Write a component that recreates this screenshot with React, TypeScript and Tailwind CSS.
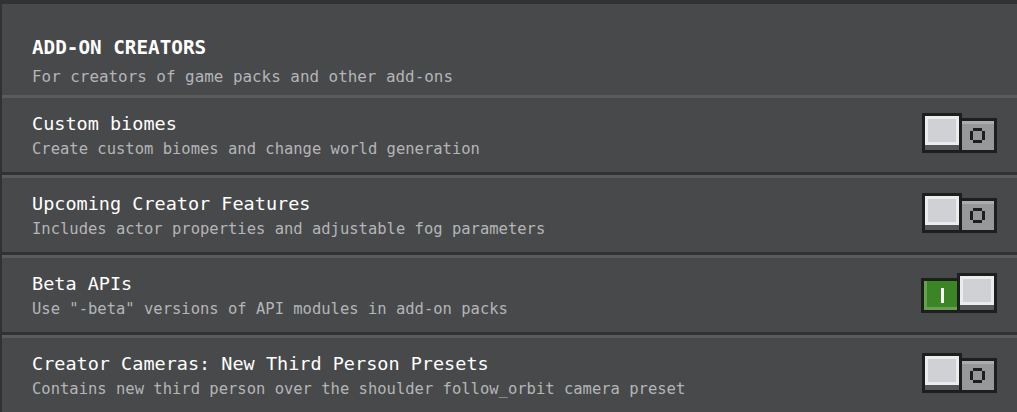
import React from "react";

const rows = [
  {
    title: "Custom biomes",
    description: "Create custom biomes and change world generation",
    on: false,
  },
  {
    title: "Upcoming Creator Features",
    description: "Includes actor properties and adjustable fog parameters",
    on: false,
  },
  {
    title: "Beta APIs",
    description: 'Use "-beta" versions of API modules in add-on packs',
    on: true,
  },
  {
    title: "Creator Cameras: New Third Person Presets",
    description: "Contains new third person over the shoulder follow_orbit camera preset",
    on: false,
  },
];

const mono = { fontFamily: '"DejaVu Sans Mono", "Liberation Mono", monospace' };

function Knob() {
  return (
    <div className="flex h-[40px] w-[40px] flex-col border-[3px] border-[#1e1e1f]">
      <div className="flex-1 border-[3px] border-[#ececed] bg-[#d0d1d4]" />
      <div className="h-[5px] bg-[#58585a]" />
    </div>
  );
}

function Toggle({ on }: { on: boolean }) {
  if (on) {
    return (
      <div className="flex items-end">
        <div className="flex h-[35px] w-[36px] border-[3px] border-r-0 border-[#1e1e1f]">
          <div className="flex flex-1 items-center justify-center border-b-[3px] border-l-[3px] border-[#64a24f] bg-[#3c8527]">
            <div className="mb-[-3px] h-[15px] w-[3px] bg-white" />
          </div>
        </div>
        <Knob />
      </div>
    );
  }
  return (
    <div className="flex items-end">
      <Knob />
      <div className="flex h-[35px] w-[35px] border-[3px] border-l-0 border-[#1e1e1f]">
        <div className="flex flex-1 items-center justify-center border-t-[3px] border-[#acadaf] bg-[#97989a]">
          <svg width="15" height="15" viewBox="0 0 15 15" className="mt-[-3px] mr-[2px]">
            <path
              d="M3 0h9v3H3zM0 3h3v9H0zM12 3h3v9h-3zM3 12h9v3H3z"
              fill="#1e1e1f"
            />
          </svg>
        </div>
      </div>
    </div>
  );
}

export default function App() {
  return (
    <div
      className="h-[412px] w-full overflow-hidden border-l-[2px] border-[#313233] bg-[#48494a]"
      style={mono}
    >
      <div className="h-[4px] bg-[#313233]" />
      <div className="pl-[30px] pt-[31px] pb-[6px]">
        <div className="text-[19.3px] font-bold leading-[26px] text-white">
          ADD-ON CREATORS
        </div>
        <div className="mt-[4px] text-[15.9px] leading-[24px] text-[#b4b5b8]">
          For creators of game packs and other add-ons
        </div>
      </div>
      {rows.map((row) => (
        <div
          key={row.title}
          className="flex h-[80px] shrink-0 items-start justify-between border-t-[3px] border-b-[3px] border-t-[#5a5b5c] border-b-[#313233] pl-[30px] pr-[20px]"
        >
          <div className="pt-[13px]">
            <div className="text-[18.5px] leading-[25px] text-white">{row.title}</div>
            <div className="mt-[1px] text-[15.5px] leading-[25px] text-[#b4b5b8]">
              {row.description}
            </div>
          </div>
          <div className="mt-[15px]">
            <Toggle on={row.on} />
          </div>
        </div>
      ))}
    </div>
  );
}
